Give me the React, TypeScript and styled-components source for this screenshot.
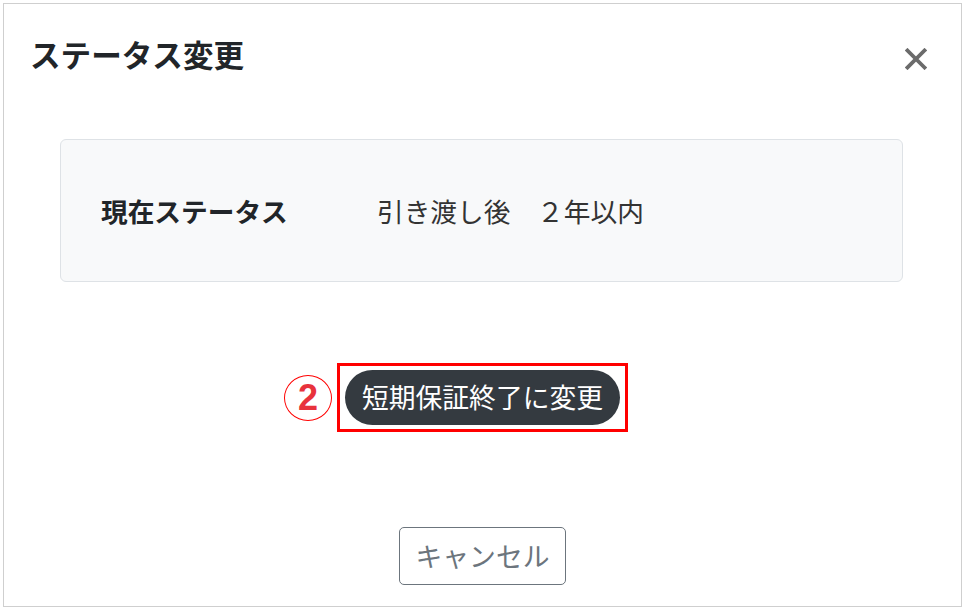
import React from 'react';
import styled, { createGlobalStyle } from 'styled-components';

// styles
const GlobalStyle = createGlobalStyle`
	* {
		box-sizing: border-box;
	}

	body {
		margin: 0;
		padding: 3px;
		background: #fff;
		font-family: 'Noto Sans CJK JP', 'Noto Sans', sans-serif;
		color: #212529;
	}
`;

// modal
const Frame = styled.div`
	width: 959px;
	height: 604px;
	border: 1px solid #cfcfcf;
	background: #fff;
	display: flex;
	flex-flow: column;
`;

const Header = styled.div`
	display: flex;
	justify-content: space-between;
	align-items: flex-start;
	padding: 32px 34px 0 26px;
`;

const Title = styled.h5`
	margin: 0;
	font-size: 30.6px;
	line-height: 36px;
	font-weight: 700;
	color: #212529;
`;

const Close = styled.button`
	margin-top: 12px;
	width: 22px;
	height: 22px;
	padding: 0;
	border: 0;
	background: transparent;
	display: flex;

	& > svg {
		width: 22px;
		height: 22px;
	}
`;

// status
const StatusCard = styled.div`
	margin: 67px 58px 0 56px;
	height: 143px;
	border: 1px solid #dee2e6;
	border-radius: 6px;
	background: #f8f9fa;
	padding-left: 40px;
	display: grid;
	grid-template-columns: 276px 1fr;
	align-items: center;
`;

const StatusText = styled.div<{ $strong?: boolean }>`
	font-size: 26.7px;
	line-height: 36px;
	font-weight: ${(p) => (p.$strong ? 700 : 400)};
	color: ${(p) => (p.$strong ? '#212529' : '#333')};
`;

// actions
const ActionRow = styled.div<{ $gap: number }>`
	margin-top: ${(p) => p.$gap}px;
	display: flex;
	justify-content: center;
`;

const Highlight = styled.div`
	position: relative;
	border: 3px solid #ff0000;
	padding: 4px 5px;
`;

const Marker = styled.span`
	position: absolute;
	top: 50%;
	right: calc(100% + 8px);
	transform: translateY(-50%);
	width: 48px;
	height: 46px;
	border: 1.5px solid #ff0000;
	border-radius: 50%;
	display: flex;
	align-items: center;
	justify-content: center;
	color: #e8323c;
	font-family: 'Liberation Sans', Arial, sans-serif;
	font-size: 36px;
	font-weight: 700;
	line-height: 1;
`;

const Button = styled.button<{ $variant: 'dark' | 'outline' }>`
	font-family: inherit;
	font-size: 26.8px;
	line-height: 1;
	height: ${(p) => (p.$variant === 'dark' ? 55 : 58)}px;
	padding: 0 ${(p) => (p.$variant === 'dark' ? 17 : 16)}px;
	border: ${(p) => (p.$variant === 'dark' ? '0' : '1px solid #6c757d')};
	border-radius: ${(p) => (p.$variant === 'dark' ? 28 : 5)}px;
	background: ${(p) => (p.$variant === 'dark' ? '#343a40' : '#fff')};
	color: ${(p) => (p.$variant === 'dark' ? '#fff' : '#6c757d')};
`;

// components
const CloseIcon = () => (
	<svg viewBox='0 0 22 22' fill='none'>
		<path d='M2.5 2.5L19.5 19.5M19.5 2.5L2.5 19.5' stroke='#6b6b6b' strokeWidth='3.8' strokeLinecap='square' />
	</svg>
);

const StatusBox = () => (
	<StatusCard>
		<StatusText $strong>現在ステータス</StatusText>
		<StatusText>引き渡し後　２年以内</StatusText>
	</StatusCard>
);

const Actions = () => (
	<>
		<ActionRow $gap={81}>
			<Highlight>
				<Marker>2</Marker>
				<Button type='button' $variant='dark'>
					短期保証終了に変更
				</Button>
			</Highlight>
		</ActionRow>

		<ActionRow $gap={95}>
			<Button type='button' $variant='outline'>
				キャンセル
			</Button>
		</ActionRow>
	</>
);

export default function App() {
	return (
		<>
			<GlobalStyle />

			<Frame>
				<Header>
					<Title>ステータス変更</Title>

					<Close type='button' aria-label='close'>
						<CloseIcon />
					</Close>
				</Header>

				<StatusBox />

				<Actions />
			</Frame>
		</>
	);
}
